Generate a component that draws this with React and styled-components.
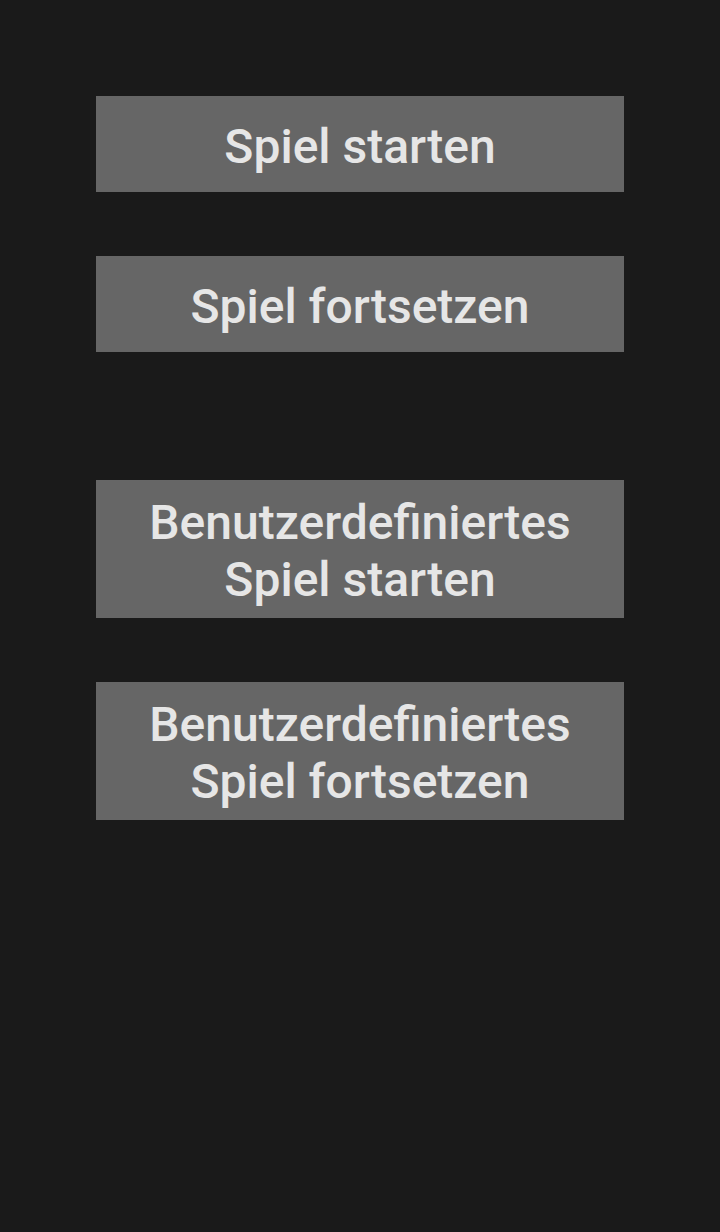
import React from 'react';
import styled, { createGlobalStyle } from 'styled-components';

const GlobalStyle = createGlobalStyle`
  html, body {
    margin: 0;
    padding: 0;
    background-color: #1a1a1a;
  }
`;

const StyledWrapper = styled.div`
  width: 720px;
  min-height: 1232px;
  background-color: #1a1a1a;
  display: flex;
  flex-direction: column;
  align-items: center;
  padding-top: 96px;
  box-sizing: border-box;
`;

const ButtonGroup = styled.div`
  display: flex;
  flex-direction: column;
  gap: 64px;
  margin-bottom: ${({ $spaced }) => ($spaced ? '128px' : '0')};
`;

const MenuButton = styled.button`
  width: 528px;
  min-height: 96px;
  padding: 14px 0 10px;
  box-sizing: border-box;
  border: none;
  border-radius: 0;
  background-color: #666666;
  color: #e6e6e6;
  font-family: Roboto, 'Liberation Sans', sans-serif;
  font-weight: 500;
  font-size: 48px;
  line-height: 57px;
  text-align: center;
  display: flex;
  align-items: center;
  justify-content: center;
`;

const App = () => (
  <>
    <GlobalStyle />
    <StyledWrapper>
      <ButtonGroup $spaced>
        <MenuButton>Spiel starten</MenuButton>
        <MenuButton>Spiel fortsetzen</MenuButton>
      </ButtonGroup>
      <ButtonGroup>
        <MenuButton>
          Benutzerdefiniertes
          <br />
          Spiel starten
        </MenuButton>
        <MenuButton>
          Benutzerdefiniertes
          <br />
          Spiel fortsetzen
        </MenuButton>
      </ButtonGroup>
    </StyledWrapper>
  </>
);

export default App;
